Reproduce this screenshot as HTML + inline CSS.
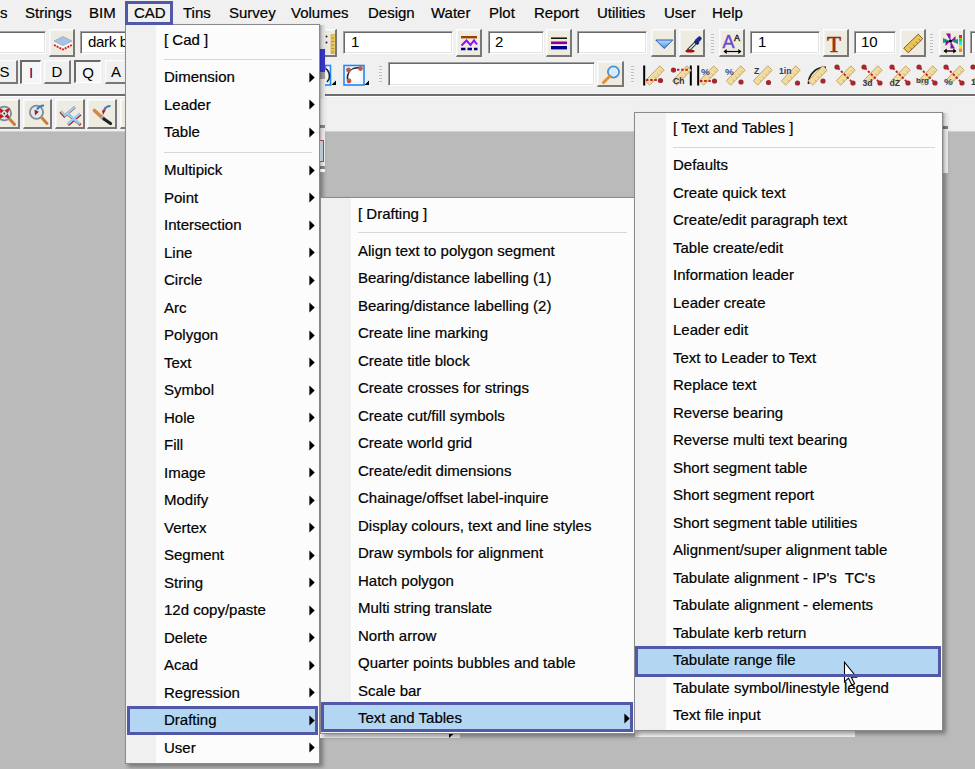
<!DOCTYPE html><html><head><meta charset="utf-8"><style>
html,body{margin:0;padding:0}body{width:975px;height:769px;overflow:hidden;position:relative;background:#f0f0f0;font-family:"Liberation Sans", sans-serif}
.t{position:absolute;white-space:nowrap;line-height:20px;font-family:"Liberation Sans", sans-serif;-webkit-text-stroke:0.2px #000}
.btn{position:absolute;box-sizing:border-box;border-style:solid;border-width:1px 2px 2px 1px;border-color:#fcfcfc #787878 #787878 #fcfcfc;box-shadow:inset 1px 1px #f4f4f4;overflow:hidden}
.sunk{position:absolute;box-sizing:border-box;border-style:solid;border-width:2px 1px 1px 2px;border-color:#6a6a6a #ffffff #ffffff #6a6a6a;overflow:hidden}
.inp{position:absolute;box-sizing:border-box;background:#fff;border-style:solid;border-width:1px;border-color:#a0a0a0 #ffffff #ffffff #a0a0a0;box-shadow:inset 1px 1px #696969, inset -1px -1px #e3e3e3;overflow:hidden;font-family:"Liberation Sans",sans-serif}
</style></head><body>
<div style="position:absolute;left:0px;top:0px;width:975px;height:25px;background:#f0f0f0"></div>
<div class="t" style="left:0px;top:2.60px;font-size:15px;color:#000;">s</div>
<div class="t" style="left:25px;top:2.60px;font-size:15px;color:#000;">Strings</div>
<div class="t" style="left:89px;top:2.60px;font-size:15px;color:#000;">BIM</div>
<div class="t" style="left:134px;top:2.60px;font-size:15px;color:#000;">CAD</div>
<div class="t" style="left:183px;top:2.60px;font-size:15px;color:#000;">Tins</div>
<div class="t" style="left:229px;top:2.60px;font-size:15px;color:#000;">Survey</div>
<div class="t" style="left:291px;top:2.60px;font-size:15px;color:#000;">Volumes</div>
<div class="t" style="left:368px;top:2.60px;font-size:15px;color:#000;">Design</div>
<div class="t" style="left:431px;top:2.60px;font-size:15px;color:#000;">Water</div>
<div class="t" style="left:489px;top:2.60px;font-size:15px;color:#000;">Plot</div>
<div class="t" style="left:534px;top:2.60px;font-size:15px;color:#000;">Report</div>
<div class="t" style="left:597px;top:2.60px;font-size:15px;color:#000;">Utilities</div>
<div class="t" style="left:664px;top:2.60px;font-size:15px;color:#000;">User</div>
<div class="t" style="left:712px;top:2.60px;font-size:15px;color:#000;">Help</div>
<div style="position:absolute;left:0px;top:25px;width:975px;height:106px;background:#f0f0f0"></div>
<div class="inp" style="left:-4px;top:31px;width:50px;height:23px"></div>
<div class="btn" style="left:49px;top:29px;width:26px;height:28px;background:#eeebe1"><svg style="position:absolute;left:0px;top:0px;overflow:visible" width="26" height="28" viewBox="0 0 26 28"><path d="M4 11 L13 6.5 L22 11 L13 15.5 Z" fill="#a6c2e6" stroke="#8aa8d0" stroke-width="0.7"/><path d="M4 13 L13 17.5 L22 13" fill="none" stroke="#ffffff" stroke-width="1.3"/><path d="M4 15 L13 19.5 L22 15" fill="none" stroke="#e01818" stroke-width="1.8" stroke-dasharray="2 1"/></svg></div>
<div class="inp" style="left:80px;top:31px;width:60px;height:23px"><span style="position:absolute;left:7px;top:0px;line-height:20px;font-size:15px;color:#000;letter-spacing:-0.3px;white-space:nowrap">dark blue</span></div>
<div class="btn" style="left:311px;top:29px;width:26px;height:28px;background:#eeebe1"><svg style="position:absolute;left:0px;top:0px;overflow:visible" width="26" height="28" viewBox="0 0 26 28"><rect x="19" y="4.5" width="4.5" height="19" fill="#eac860" stroke="#d0a848" stroke-width="0.7"/><path d="M19.5 8h2.5M19.5 11.5h2.5M19.5 15h2.5M19.5 18.5h2.5M19.5 22h2.5" stroke="#a07830" stroke-width="0.8"/><circle cx="14.5" cy="6.5" r="1" fill="#222"/><circle cx="14.5" cy="12.5" r="1" fill="#222"/></svg></div>
<div style="position:absolute;left:320px;top:49px;width:5px;height:22px;background:#3434c8"></div>
<div class="inp" style="left:343px;top:31px;width:110px;height:23px"><span style="position:absolute;left:7px;top:0px;line-height:20px;font-size:15px;color:#000;letter-spacing:0px;white-space:nowrap">1</span></div>
<div class="btn" style="left:456px;top:29px;width:26px;height:28px;background:#eeebe1"><svg style="position:absolute;left:0px;top:0px;overflow:visible" width="26" height="28" viewBox="0 0 26 28"><rect x="4" y="6" width="16" height="2.4" fill="#a04000"/><path d="M4.5 15.5 L9.5 10.5 L13.5 15 L17 10.5 L20 14.5" fill="none" stroke="#8a10ff" stroke-width="2"/><path d="M4 19h4.5M10.5 19h4.5M17 19h3.5" stroke="#000080" stroke-width="2.4"/></svg></div>
<div class="inp" style="left:488px;top:31px;width:56px;height:23px"><span style="position:absolute;left:6px;top:0px;line-height:20px;font-size:15px;color:#000;letter-spacing:0px;white-space:nowrap">2</span></div>
<div class="btn" style="left:546px;top:29px;width:26px;height:28px;background:#eeebe1"><svg style="position:absolute;left:0px;top:0px;overflow:visible" width="26" height="28" viewBox="0 0 26 28"><rect x="4" y="7.5" width="16" height="1.4" fill="#000"/><rect x="4" y="11.5" width="16" height="2.6" fill="#8a008a"/><rect x="4" y="16" width="16" height="3.4" fill="#000090"/></svg></div>
<div class="inp" style="left:577px;top:31px;width:70px;height:23px"></div>
<div class="btn" style="left:651px;top:29px;width:25px;height:28px;background:#eeebe1"><svg style="position:absolute;left:0px;top:0px;overflow:visible" width="25" height="28" viewBox="0 0 25 28"><defs><linearGradient id="tg" x1="0" y1="0" x2="0" y2="1"><stop offset="0" stop-color="#b8e0ff"/><stop offset="1" stop-color="#4a8ae0"/></linearGradient></defs><path d="M3.8 10 L20.8 10 L12.2 18.5 Z" fill="url(#tg)" stroke="#1c48a8" stroke-width="0.9" stroke-linejoin="round"/></svg></div>
<div class="btn" style="left:679px;top:29px;width:26px;height:28px;background:#eeebe1"><svg style="position:absolute;left:0px;top:0px;overflow:visible" width="26" height="28" viewBox="0 0 26 28"><path d="M8.5 20 L15.5 13" stroke="#303840" stroke-width="3.4" stroke-linecap="round"/><path d="M9 19.5 L15 13.5" stroke="#e4ecf2" stroke-width="1.4"/><path d="M15 10.5 L18.5 14" stroke="#101860" stroke-width="2.6"/><path d="M17 11 L19.5 8.5" stroke="#1a2a90" stroke-width="4.2" stroke-linecap="round"/><ellipse cx="10" cy="21" rx="4.6" ry="1.5" fill="#a01010"/></svg></div>
<div style="position:absolute;left:711px;top:34px;width:3px;height:19px;background:repeating-linear-gradient(#bcbcbc 0 1px,#f4f4f4 1px 3px)"></div>
<div class="btn" style="left:719px;top:29px;width:26px;height:28px;background:#eeebe1"><svg style="position:absolute;left:0px;top:0px;overflow:visible" width="26" height="28" viewBox="0 0 26 28"><text x="2.5" y="17.5" font-family="Liberation Sans" font-size="18" fill="#6a48d0" stroke="#6a48d0" stroke-width="0.4">A</text><text x="14" y="11" font-family="Liberation Sans" font-size="9" fill="#000" stroke="#000" stroke-width="0.3">A</text><path d="M4 21.5h17" stroke="#000" stroke-width="1.2"/><path d="M3.5 21.5l3.2-2.4v4.8z M21.5 21.5l-3.2-2.4v4.8z" fill="#000"/></svg></div>
<div class="inp" style="left:750px;top:31px;width:70px;height:23px"><span style="position:absolute;left:7px;top:0px;line-height:20px;font-size:15px;color:#000;letter-spacing:0px;white-space:nowrap">1</span></div>
<div class="btn" style="left:823px;top:29px;width:26px;height:28px;background:#eeebe1"><svg style="position:absolute;left:0px;top:0px;overflow:visible" width="26" height="28" viewBox="0 0 26 28"><text x="3" y="21.5" font-family="Liberation Serif" font-size="23" fill="#98300c" stroke="#98300c" stroke-width="0.6">T</text></svg></div>
<div class="inp" style="left:854px;top:31px;width:42px;height:23px"><span style="position:absolute;left:6px;top:0px;line-height:20px;font-size:15px;color:#000;letter-spacing:0px;white-space:nowrap">10</span></div>
<div class="btn" style="left:900px;top:29px;width:26px;height:28px;background:#eeebe1"><svg style="position:absolute;left:0px;top:0px;overflow:visible" width="26" height="28" viewBox="0 0 26 28"><path d="M7.22 22.80 L2.78 18.20 L17.28 4.20 L21.72 8.80 Z" fill="#ecc456" stroke="#6a5018" stroke-width="0.9" stroke-linejoin="round"/><path d="M10.63 19.07 L9.07 17.46 M13.53 16.27 L11.97 14.66 M16.43 13.47 L14.87 11.86 M19.33 10.67 L17.77 9.06 " stroke="#6a5018" stroke-width="0.7"/></svg></div>
<div style="position:absolute;left:930px;top:34px;width:3px;height:19px;background:repeating-linear-gradient(#bcbcbc 0 1px,#f4f4f4 1px 3px)"></div>
<div class="btn" style="left:939px;top:29px;width:26px;height:28px;background:#eeebe1"><svg style="position:absolute;left:0px;top:0px;overflow:visible" width="26" height="28" viewBox="0 0 26 28"><path d="M6 3.5 L10.5 3.5 L10.5 11 Z" fill="#8a10a0"/><path d="M10.5 11 L15.5 6 L15.5 11 Z" fill="#8a10a0"/><path d="M3 8 L3 13 L10 11 Z" fill="#18908c"/><path d="M11 11 L18 9 L18 14 Z" fill="#18908c"/><path d="M10.5 11 L10.5 18.5 L15 18.5 Z" fill="#8a10a0"/><path d="M10.5 11 L5.5 16 L5.5 11 Z" fill="#8a10a0"/><circle cx="10.5" cy="11" r="1.6" fill="#000"/><rect x="19" y="5" width="3" height="3.4" fill="#ff2020"/><rect x="19" y="8.4" width="3" height="3.4" fill="#20e020"/><rect x="19" y="11.8" width="3" height="3.4" fill="#20e8f0"/><rect x="19" y="15.2" width="3" height="3.4" fill="#ffe000"/><rect x="19" y="18.6" width="3" height="3.4" fill="#ff8030"/><path d="M5 21h10" stroke="#000" stroke-width="1.4"/><path d="M3.5 21l3.2-2.4v4.8z M16.5 21l-3.2-2.4v4.8z" fill="#000"/></svg></div>
<div class="inp" style="left:970px;top:31px;width:30px;height:23px"></div>
<div class="btn" style="left:-8px;top:60px;width:26px;height:24px;background:#f0f0f0"><span style="position:absolute;left:0px;right:0;top:1px;text-align:center;line-height:20px;font-size:15px;color:#000">S</span></div>
<div class="sunk" style="left:20px;top:60px;width:21px;height:24px;background:#f6f6f6"><span style="position:absolute;left:0px;right:0;top:1px;text-align:center;line-height:20px;font-size:15px;color:#4a0060">I</span></div>
<div class="btn" style="left:44px;top:60px;width:27px;height:24px;background:#f0f0f0"><span style="position:absolute;left:0px;right:0;top:1px;text-align:center;line-height:20px;font-size:15px;color:#000">D</span></div>
<div class="sunk" style="left:74px;top:60px;width:27px;height:23px;background:#f6f6f6"><span style="position:absolute;left:0px;right:0;top:1px;text-align:center;line-height:20px;font-size:15px;color:#000">Q</span></div>
<div class="btn" style="left:105px;top:60px;width:30px;height:24px;background:#f0f0f0"><span style="position:absolute;left:-7px;right:0;top:1px;text-align:center;line-height:20px;font-size:15px;color:#000">A</span></div>
<svg style="position:absolute;left:318px;top:64px;overflow:visible" width="52" height="23" viewBox="0 0 52 23"><rect x="-8" y="1.5" width="20.5" height="19.5" fill="#f6f6f6" stroke="#1e88ff" stroke-width="1.6"/><path d="M4 3 A9 9 0 0 1 9 18" fill="none" stroke="#222" stroke-width="1.6"/><circle cx="6" cy="4" r="2.3" fill="#c05848"/><path d="M13.5 21 L18 16.5 L18 21 Z" fill="#000"/><rect x="26" y="1.5" width="20" height="19.5" fill="#f6f6f6" stroke="#1e88ff" stroke-width="1.6"/><path d="M30 17 A10 10 0 0 1 43 4.5" fill="none" stroke="#222" stroke-width="1.6"/><circle cx="37" cy="11" r="6" fill="#ffffff"/><circle cx="30.5" cy="6" r="2.4" fill="#c05848"/><circle cx="42.5" cy="4.5" r="2.4" fill="#c05848"/><circle cx="31" cy="17" r="2.4" fill="#c05848"/><path d="M46.5 21 L51 16.5 L51 21 Z" fill="#000"/></svg>
<div style="position:absolute;left:379px;top:66px;width:3px;height:18px;background:repeating-linear-gradient(#bcbcbc 0 1px,#f4f4f4 1px 3px)"></div>
<div class="inp" style="left:388px;top:62px;width:207px;height:24px"></div>
<div class="btn" style="left:597px;top:61px;width:27px;height:26px;background:#eeebe1"><svg style="position:absolute;left:0px;top:0px;overflow:visible" width="27" height="26" viewBox="0 0 27 26"><circle cx="15.5" cy="10" r="5.6" fill="#d4ecff" stroke="#4a90d0" stroke-width="1.7"/><path d="M12 14 L5.5 20.5" stroke="#e89028" stroke-width="3" stroke-linecap="round"/></svg></div>
<div style="position:absolute;left:631px;top:66px;width:3px;height:18px;background:repeating-linear-gradient(#bcbcbc 0 1px,#f4f4f4 1px 3px)"></div>
<svg style="position:absolute;left:643px;top:64px;overflow:visible" width="22" height="22" viewBox="0 0 22 22"><path d="M1.2 1.5v20" stroke="#000" stroke-width="2"/><path d="M6.73 21.15 L2.27 16.85 L16.77 1.85 L21.23 6.15 Z" fill="#f0dca0" stroke="#c0a060" stroke-width="0.9" stroke-linejoin="round"/><path d="M10.13 17.19 L8.57 15.68 M13.03 14.19 L11.47 12.68 M15.93 11.19 L14.37 9.68 M18.83 8.19 L17.27 6.68 " stroke="#c0a060" stroke-width="0.7"/><path d="M3 16 L14 16" stroke="#c42020" stroke-width="1.9" stroke-dasharray="2.4 1.8"/><circle cx="17.5" cy="16.5" r="2.6" fill="#a42830"/></svg>
<svg style="position:absolute;left:670px;top:64px;overflow:visible" width="22" height="22" viewBox="0 0 22 22"><path d="M20.8 1.5v20" stroke="#000" stroke-width="2"/><path d="M6.73 21.15 L2.27 16.85 L16.77 1.85 L21.23 6.15 Z" fill="#f0dca0" stroke="#c0a060" stroke-width="0.9" stroke-linejoin="round"/><path d="M10.13 17.19 L8.57 15.68 M13.03 14.19 L11.47 12.68 M15.93 11.19 L14.37 9.68 M18.83 8.19 L17.27 6.68 " stroke="#c0a060" stroke-width="0.7"/><circle cx="3.5" cy="6" r="2.6" fill="#a42830"/><path d="M7 5.8 L19 5.8" stroke="#c42020" stroke-width="1.9" stroke-dasharray="2.4 1.8"/><text x="3" y="19.5" font-family="Liberation Sans" font-size="8.6" font-weight="bold" fill="#1c2450" opacity="0.9">Ch</text></svg>
<svg style="position:absolute;left:697px;top:64px;overflow:visible" width="22" height="22" viewBox="0 0 22 22"><path d="M1.2 1.5v20" stroke="#000" stroke-width="2"/><path d="M6.73 21.15 L2.27 16.85 L16.77 1.85 L21.23 6.15 Z" fill="#f0dca0" stroke="#c0a060" stroke-width="0.9" stroke-linejoin="round"/><path d="M10.13 17.19 L8.57 15.68 M13.03 14.19 L11.47 12.68 M15.93 11.19 L14.37 9.68 M18.83 8.19 L17.27 6.68 " stroke="#c0a060" stroke-width="0.7"/><text x="4" y="11" font-family="Liberation Sans" font-size="9.9" font-weight="bold" fill="#203a80" opacity="0.9">%</text><path d="M3 17 L14 17" stroke="#c42020" stroke-width="1.9" stroke-dasharray="2.4 1.8"/><circle cx="17.5" cy="17" r="2.6" fill="#a42830"/></svg>
<svg style="position:absolute;left:724px;top:64px;overflow:visible" width="22" height="22" viewBox="0 0 22 22"><path d="M6.73 21.15 L2.27 16.85 L16.77 1.85 L21.23 6.15 Z" fill="#f0dca0" stroke="#c0a060" stroke-width="0.9" stroke-linejoin="round"/><path d="M10.13 17.19 L8.57 15.68 M13.03 14.19 L11.47 12.68 M15.93 11.19 L14.37 9.68 M18.83 8.19 L17.27 6.68 " stroke="#c0a060" stroke-width="0.7"/><text x="1" y="11" font-family="Liberation Sans" font-size="9.9" font-weight="bold" fill="#203a80" opacity="0.9">%</text><circle cx="17" cy="18" r="2.6" fill="#a42830"/></svg>
<svg style="position:absolute;left:751px;top:64px;overflow:visible" width="22" height="22" viewBox="0 0 22 22"><path d="M6.73 21.15 L2.27 16.85 L16.77 1.85 L21.23 6.15 Z" fill="#f0dca0" stroke="#c0a060" stroke-width="0.9" stroke-linejoin="round"/><path d="M10.13 17.19 L8.57 15.68 M13.03 14.19 L11.47 12.68 M15.93 11.19 L14.37 9.68 M18.83 8.19 L17.27 6.68 " stroke="#c0a060" stroke-width="0.7"/><text x="3" y="9.5" font-family="Liberation Sans" font-size="8.6" font-weight="bold" fill="#1c2450" opacity="0.9">Z</text><circle cx="17.5" cy="18.5" r="2.6" fill="#a42830"/></svg>
<svg style="position:absolute;left:779px;top:64px;overflow:visible" width="22" height="22" viewBox="0 0 22 22"><path d="M6.73 21.15 L2.27 16.85 L16.77 1.85 L21.23 6.15 Z" fill="#f0dca0" stroke="#c0a060" stroke-width="0.9" stroke-linejoin="round"/><path d="M10.13 17.19 L8.57 15.68 M13.03 14.19 L11.47 12.68 M15.93 11.19 L14.37 9.68 M18.83 8.19 L17.27 6.68 " stroke="#c0a060" stroke-width="0.7"/><text x="0" y="9.5" font-family="Liberation Sans" font-size="8.6" font-weight="bold" fill="#1c2450" opacity="0.9">1in</text><circle cx="18.5" cy="19" r="2.6" fill="#a42830"/></svg>
<svg style="position:absolute;left:806px;top:64px;overflow:visible" width="22" height="22" viewBox="0 0 22 22"><path d="M2.5 20 A16 16 0 0 1 20 3.5" fill="none" stroke="#222" stroke-width="1.8"/><path d="M6.73 21.15 L2.27 16.85 L16.77 1.85 L21.23 6.15 Z" fill="#f0dca0" stroke="#c0a060" stroke-width="0.9" stroke-linejoin="round"/><path d="M10.13 17.19 L8.57 15.68 M13.03 14.19 L11.47 12.68 M15.93 11.19 L14.37 9.68 M18.83 8.19 L17.27 6.68 " stroke="#c0a060" stroke-width="0.7"/><circle cx="17" cy="17" r="2.6" fill="#a42830"/></svg>
<svg style="position:absolute;left:834px;top:64px;overflow:visible" width="22" height="22" viewBox="0 0 22 22"><path d="M6.73 21.15 L2.27 16.85 L16.77 1.85 L21.23 6.15 Z" fill="#f0dca0" stroke="#c0a060" stroke-width="0.9" stroke-linejoin="round"/><path d="M10.13 17.19 L8.57 15.68 M13.03 14.19 L11.47 12.68 M15.93 11.19 L14.37 9.68 M18.83 8.19 L17.27 6.68 " stroke="#c0a060" stroke-width="0.7"/><path d="M4 4 L18 18" stroke="#c42020" stroke-width="1.9" stroke-dasharray="2.4 1.8"/><circle cx="3" cy="3" r="2.6" fill="#a42830"/><circle cx="19" cy="19" r="2.6" fill="#a42830"/></svg>
<svg style="position:absolute;left:861px;top:64px;overflow:visible" width="22" height="22" viewBox="0 0 22 22"><path d="M6.73 21.15 L2.27 16.85 L16.77 1.85 L21.23 6.15 Z" fill="#f0dca0" stroke="#c0a060" stroke-width="0.9" stroke-linejoin="round"/><path d="M10.13 17.19 L8.57 15.68 M13.03 14.19 L11.47 12.68 M15.93 11.19 L14.37 9.68 M18.83 8.19 L17.27 6.68 " stroke="#c0a060" stroke-width="0.7"/><path d="M4 4 L18 18" stroke="#c42020" stroke-width="1.9" stroke-dasharray="2.4 1.8"/><circle cx="3" cy="3" r="2.6" fill="#a42830"/><circle cx="19" cy="19" r="2.6" fill="#a42830"/><text x="1.5" y="21.5" font-family="Liberation Sans" font-size="8.6" font-weight="bold" fill="#1c2450" opacity="0.9">3d</text></svg>
<svg style="position:absolute;left:889px;top:64px;overflow:visible" width="22" height="22" viewBox="0 0 22 22"><path d="M6.73 21.15 L2.27 16.85 L16.77 1.85 L21.23 6.15 Z" fill="#f0dca0" stroke="#c0a060" stroke-width="0.9" stroke-linejoin="round"/><path d="M10.13 17.19 L8.57 15.68 M13.03 14.19 L11.47 12.68 M15.93 11.19 L14.37 9.68 M18.83 8.19 L17.27 6.68 " stroke="#c0a060" stroke-width="0.7"/><path d="M4 4 L18 18" stroke="#c42020" stroke-width="1.9" stroke-dasharray="2.4 1.8"/><circle cx="3" cy="3" r="2.6" fill="#a42830"/><circle cx="19" cy="19" r="2.6" fill="#a42830"/><text x="0.5" y="21.5" font-family="Liberation Sans" font-size="8.6" font-weight="bold" fill="#1c2450" opacity="0.9">dZ</text></svg>
<svg style="position:absolute;left:916px;top:64px;overflow:visible" width="22" height="22" viewBox="0 0 22 22"><path d="M6.73 21.15 L2.27 16.85 L16.77 1.85 L21.23 6.15 Z" fill="#f0dca0" stroke="#c0a060" stroke-width="0.9" stroke-linejoin="round"/><path d="M10.13 17.19 L8.57 15.68 M13.03 14.19 L11.47 12.68 M15.93 11.19 L14.37 9.68 M18.83 8.19 L17.27 6.68 " stroke="#c0a060" stroke-width="0.7"/><path d="M4 4 L18 18" stroke="#c42020" stroke-width="1.9" stroke-dasharray="2.4 1.8"/><circle cx="3" cy="3" r="2.6" fill="#a42830"/><circle cx="19" cy="19" r="2.6" fill="#a42830"/><text x="0" y="19" font-family="Liberation Sans" font-size="8.1" font-weight="bold" fill="#1c2450" opacity="0.9">brg</text></svg>
<svg style="position:absolute;left:943px;top:64px;overflow:visible" width="22" height="22" viewBox="0 0 22 22"><path d="M6.73 21.15 L2.27 16.85 L16.77 1.85 L21.23 6.15 Z" fill="#f0dca0" stroke="#c0a060" stroke-width="0.9" stroke-linejoin="round"/><path d="M10.13 17.19 L8.57 15.68 M13.03 14.19 L11.47 12.68 M15.93 11.19 L14.37 9.68 M18.83 8.19 L17.27 6.68 " stroke="#c0a060" stroke-width="0.7"/><path d="M4 4 L18 18" stroke="#c42020" stroke-width="1.9" stroke-dasharray="2.4 1.8"/><circle cx="3" cy="3" r="2.6" fill="#a42830"/><circle cx="19" cy="19" r="2.6" fill="#a42830"/><text x="1" y="21" font-family="Liberation Sans" font-size="9.9" font-weight="bold" fill="#203a80" opacity="0.9">%</text></svg>
<svg style="position:absolute;left:970px;top:64px;overflow:visible" width="22" height="22" viewBox="0 0 22 22"><path d="M6.73 21.15 L2.27 16.85 L16.77 1.85 L21.23 6.15 Z" fill="#f0dca0" stroke="#c0a060" stroke-width="0.9" stroke-linejoin="round"/><path d="M10.13 17.19 L8.57 15.68 M13.03 14.19 L11.47 12.68 M15.93 11.19 L14.37 9.68 M18.83 8.19 L17.27 6.68 " stroke="#c0a060" stroke-width="0.7"/><circle cx="3" cy="3" r="2.6" fill="#a42830"/><text x="1" y="21" font-family="Liberation Sans" font-size="8.6" font-weight="bold" fill="#1c2450" opacity="0.9">1</text></svg>
<div class="btn" style="left:-10px;top:99px;width:30px;height:30px;background:#eeebe1"><svg style="position:absolute;left:0px;top:0px;overflow:visible" width="30" height="30" viewBox="0 0 30 30"><circle cx="13.3" cy="13.5" r="6.8" fill="#d8e6f0" stroke="#7e8c98" stroke-width="1.8"/><path d="M8.5 9 L12 10.5 L10 12.5 Z M18 9 L14.5 10.5 L16.5 12.5 Z M8.5 18 L12 16.5 L10 14.5 Z M18 18 L14.5 16.5 L16.5 14.5 Z" fill="#c81818" stroke="#c81818" stroke-width="1.2"/><circle cx="13.3" cy="13.5" r="0.9" fill="#333"/><path d="M19 19.5 L23.5 24.5" stroke="#c8803a" stroke-width="3" stroke-linecap="round"/></svg></div>
<div class="btn" style="left:23px;top:99px;width:29px;height:30px;background:#eeebe1"><svg style="position:absolute;left:0px;top:0px;overflow:visible" width="29" height="30" viewBox="0 0 29 30"><circle cx="12.5" cy="12.3" r="6.6" fill="#e0ecf4" stroke="#7e8c98" stroke-width="1.8"/><path d="M10.5 9.5 L14.8 11.8 L11 15.5 Z" fill="#c01010"/><path d="M13 9.5 Q15.5 5.5 20 5.5" fill="none" stroke="#3a78c0" stroke-width="2.2"/><path d="M18 18 L23 23.5" stroke="#c8803a" stroke-width="3" stroke-linecap="round"/></svg></div>
<div class="btn" style="left:55px;top:99px;width:30px;height:30px;background:#eeebe1"><svg style="position:absolute;left:0px;top:0px;overflow:visible" width="30" height="30" viewBox="0 0 30 30"><path d="M5 11 L9 15.3 L19.3 6.3" fill="none" stroke="#c01818" stroke-width="2.6" transform="translate(-0.6,0.9)"/><path d="M5 11 L9 15.3 L19.3 6.3" fill="none" stroke="#90d0f4" stroke-width="2.4"/><path d="M11.5 13.5 L24 24 M24 13.5 L11.5 24" fill="none" stroke="#c01818" stroke-width="2.6" transform="translate(0.6,0.9)"/><path d="M11.5 13.5 L24 24 M24 13.5 L11.5 24" fill="none" stroke="#90d0f4" stroke-width="2.4"/></svg></div>
<div class="btn" style="left:87px;top:99px;width:30px;height:30px;background:#eeebe1"><svg style="position:absolute;left:0px;top:0px;overflow:visible" width="30" height="30" viewBox="0 0 30 30"><path d="M6.5 10.5 L13.5 17" stroke="#d08a48" stroke-width="3.6" stroke-linecap="round"/><path d="M13 16.5 L16.5 19.5" stroke="#a0a8b0" stroke-width="3.8"/><path d="M16 19 L22.5 23.5" stroke="#202020" stroke-width="3.2" stroke-linecap="round"/><path d="M14 10.5 L18 9.5 L15 15 Z" fill="#c01010"/><path d="M16 10 Q18 6 22.5 6" fill="none" stroke="#3a78c0" stroke-width="2.2"/></svg></div>
<div class="btn" style="left:120px;top:99px;width:30px;height:30px;background:#eeebe1"></div>
<div style="position:absolute;left:0px;top:94px;width:975px;height:2px;background:#6e6e6e"></div>
<div style="position:absolute;left:0px;top:96px;width:975px;height:1px;background:#ffffff"></div>
<div style="position:absolute;left:0px;top:131px;width:975px;height:1px;background:#d0d0d0"></div>
<div style="position:absolute;left:0px;top:132px;width:975px;height:637px;background:#bababa"></div>
<div style="position:absolute;left:125px;top:24px;width:195px;height:740px;box-shadow:3px 3px 4px rgba(0,0,0,0.35)"></div>
<div style="position:absolute;left:125px;top:24px;width:195px;height:740px;background:#fcfcfc;border:1px solid #8a8a8a;box-sizing:border-box"></div>
<div style="position:absolute;left:126px;top:25px;width:30px;height:738px;background:#f0f0f0"></div>
<div class="t" style="left:164px;top:30.00px;font-size:15px;color:#000;">[ Cad ]</div>
<div style="position:absolute;left:164px;top:59px;width:148px;height:1px;background:#d7d7d7"></div>
<div class="t" style="left:164px;top:67.00px;font-size:15px;color:#000;">Dimension</div>
<svg style="position:absolute;left:308.5px;top:71.7px" width="6" height="11" viewBox="0 0 6 11"><path d="M0.4 0.6 L5.7 5.5 L0.4 10.4 Z" fill="#000"/></svg>
<div class="t" style="left:164px;top:94.50px;font-size:15px;color:#000;">Leader</div>
<svg style="position:absolute;left:308.5px;top:99.2px" width="6" height="11" viewBox="0 0 6 11"><path d="M0.4 0.6 L5.7 5.5 L0.4 10.4 Z" fill="#000"/></svg>
<div class="t" style="left:164px;top:122.00px;font-size:15px;color:#000;">Table</div>
<svg style="position:absolute;left:308.5px;top:126.69999999999999px" width="6" height="11" viewBox="0 0 6 11"><path d="M0.4 0.6 L5.7 5.5 L0.4 10.4 Z" fill="#000"/></svg>
<div style="position:absolute;left:164px;top:152px;width:148px;height:1px;background:#d7d7d7"></div>
<div class="t" style="left:164px;top:160.00px;font-size:15px;color:#000;">Multipick</div>
<svg style="position:absolute;left:308.5px;top:164.7px" width="6" height="11" viewBox="0 0 6 11"><path d="M0.4 0.6 L5.7 5.5 L0.4 10.4 Z" fill="#000"/></svg>
<div class="t" style="left:164px;top:187.50px;font-size:15px;color:#000;">Point</div>
<svg style="position:absolute;left:308.5px;top:192.2px" width="6" height="11" viewBox="0 0 6 11"><path d="M0.4 0.6 L5.7 5.5 L0.4 10.4 Z" fill="#000"/></svg>
<div class="t" style="left:164px;top:215.00px;font-size:15px;color:#000;">Intersection</div>
<svg style="position:absolute;left:308.5px;top:219.7px" width="6" height="11" viewBox="0 0 6 11"><path d="M0.4 0.6 L5.7 5.5 L0.4 10.4 Z" fill="#000"/></svg>
<div class="t" style="left:164px;top:242.50px;font-size:15px;color:#000;">Line</div>
<svg style="position:absolute;left:308.5px;top:247.2px" width="6" height="11" viewBox="0 0 6 11"><path d="M0.4 0.6 L5.7 5.5 L0.4 10.4 Z" fill="#000"/></svg>
<div class="t" style="left:164px;top:270.00px;font-size:15px;color:#000;">Circle</div>
<svg style="position:absolute;left:308.5px;top:274.7px" width="6" height="11" viewBox="0 0 6 11"><path d="M0.4 0.6 L5.7 5.5 L0.4 10.4 Z" fill="#000"/></svg>
<div class="t" style="left:164px;top:297.50px;font-size:15px;color:#000;">Arc</div>
<svg style="position:absolute;left:308.5px;top:302.2px" width="6" height="11" viewBox="0 0 6 11"><path d="M0.4 0.6 L5.7 5.5 L0.4 10.4 Z" fill="#000"/></svg>
<div class="t" style="left:164px;top:325.00px;font-size:15px;color:#000;">Polygon</div>
<svg style="position:absolute;left:308.5px;top:329.7px" width="6" height="11" viewBox="0 0 6 11"><path d="M0.4 0.6 L5.7 5.5 L0.4 10.4 Z" fill="#000"/></svg>
<div class="t" style="left:164px;top:352.50px;font-size:15px;color:#000;">Text</div>
<svg style="position:absolute;left:308.5px;top:357.2px" width="6" height="11" viewBox="0 0 6 11"><path d="M0.4 0.6 L5.7 5.5 L0.4 10.4 Z" fill="#000"/></svg>
<div class="t" style="left:164px;top:380.00px;font-size:15px;color:#000;">Symbol</div>
<svg style="position:absolute;left:308.5px;top:384.7px" width="6" height="11" viewBox="0 0 6 11"><path d="M0.4 0.6 L5.7 5.5 L0.4 10.4 Z" fill="#000"/></svg>
<div class="t" style="left:164px;top:407.50px;font-size:15px;color:#000;">Hole</div>
<svg style="position:absolute;left:308.5px;top:412.2px" width="6" height="11" viewBox="0 0 6 11"><path d="M0.4 0.6 L5.7 5.5 L0.4 10.4 Z" fill="#000"/></svg>
<div class="t" style="left:164px;top:435.00px;font-size:15px;color:#000;">Fill</div>
<svg style="position:absolute;left:308.5px;top:439.7px" width="6" height="11" viewBox="0 0 6 11"><path d="M0.4 0.6 L5.7 5.5 L0.4 10.4 Z" fill="#000"/></svg>
<div class="t" style="left:164px;top:462.50px;font-size:15px;color:#000;">Image</div>
<svg style="position:absolute;left:308.5px;top:467.2px" width="6" height="11" viewBox="0 0 6 11"><path d="M0.4 0.6 L5.7 5.5 L0.4 10.4 Z" fill="#000"/></svg>
<div class="t" style="left:164px;top:490.00px;font-size:15px;color:#000;">Modify</div>
<svg style="position:absolute;left:308.5px;top:494.7px" width="6" height="11" viewBox="0 0 6 11"><path d="M0.4 0.6 L5.7 5.5 L0.4 10.4 Z" fill="#000"/></svg>
<div class="t" style="left:164px;top:517.50px;font-size:15px;color:#000;">Vertex</div>
<svg style="position:absolute;left:308.5px;top:522.2px" width="6" height="11" viewBox="0 0 6 11"><path d="M0.4 0.6 L5.7 5.5 L0.4 10.4 Z" fill="#000"/></svg>
<div class="t" style="left:164px;top:545.00px;font-size:15px;color:#000;">Segment</div>
<svg style="position:absolute;left:308.5px;top:549.7px" width="6" height="11" viewBox="0 0 6 11"><path d="M0.4 0.6 L5.7 5.5 L0.4 10.4 Z" fill="#000"/></svg>
<div class="t" style="left:164px;top:572.50px;font-size:15px;color:#000;">String</div>
<svg style="position:absolute;left:308.5px;top:577.2px" width="6" height="11" viewBox="0 0 6 11"><path d="M0.4 0.6 L5.7 5.5 L0.4 10.4 Z" fill="#000"/></svg>
<div class="t" style="left:164px;top:600.00px;font-size:15px;color:#000;">12d copy/paste</div>
<svg style="position:absolute;left:308.5px;top:604.7px" width="6" height="11" viewBox="0 0 6 11"><path d="M0.4 0.6 L5.7 5.5 L0.4 10.4 Z" fill="#000"/></svg>
<div class="t" style="left:164px;top:627.50px;font-size:15px;color:#000;">Delete</div>
<svg style="position:absolute;left:308.5px;top:632.2px" width="6" height="11" viewBox="0 0 6 11"><path d="M0.4 0.6 L5.7 5.5 L0.4 10.4 Z" fill="#000"/></svg>
<div class="t" style="left:164px;top:655.00px;font-size:15px;color:#000;">Acad</div>
<svg style="position:absolute;left:308.5px;top:659.7px" width="6" height="11" viewBox="0 0 6 11"><path d="M0.4 0.6 L5.7 5.5 L0.4 10.4 Z" fill="#000"/></svg>
<div class="t" style="left:164px;top:682.50px;font-size:15px;color:#000;">Regression</div>
<svg style="position:absolute;left:308.5px;top:687.2px" width="6" height="11" viewBox="0 0 6 11"><path d="M0.4 0.6 L5.7 5.5 L0.4 10.4 Z" fill="#000"/></svg>
<div style="position:absolute;left:127px;top:706px;width:191px;height:29px;background:#b3d7f3;border:3.5px solid #5258a8;box-sizing:border-box"></div>
<div class="t" style="left:164px;top:710.00px;font-size:15px;color:#000;">Drafting</div>
<svg style="position:absolute;left:308.5px;top:714.7px" width="6" height="11" viewBox="0 0 6 11"><path d="M0.4 0.6 L5.7 5.5 L0.4 10.4 Z" fill="#000"/></svg>
<div class="t" style="left:164px;top:737.50px;font-size:15px;color:#000;">User</div>
<svg style="position:absolute;left:308.5px;top:742.2px" width="6" height="11" viewBox="0 0 6 11"><path d="M0.4 0.6 L5.7 5.5 L0.4 10.4 Z" fill="#000"/></svg>
<div style="position:absolute;left:125px;top:1px;width:48px;height:24px;border:3.5px solid #5258a8;box-sizing:border-box"></div>
<div style="position:absolute;left:320px;top:25px;width:5px;height:75px;background:linear-gradient(90deg,#9a9a9a,#cfcfcf 40%,#e6e6e6)"></div>
<div style="position:absolute;left:320px;top:49px;width:5px;height:23px;background:linear-gradient(90deg,#2a2a9a,#3434c8 40%)"></div>
<div style="position:absolute;left:320px;top:72px;width:5px;height:7px;background:linear-gradient(90deg,#6a6a6a,#8a8a8a 40%,#a0a0a0)"></div>
<div style="position:absolute;left:320px;top:99px;width:5px;height:73px;background:linear-gradient(90deg,#a8a8a8,#d8d8d8 40%,#ececec)"></div>
<div style="position:absolute;left:320px;top:125px;width:5px;height:3px;background:linear-gradient(90deg,#5a5a5a,#7a7a7a 40%,#8a8a8a)"></div>
<div style="position:absolute;left:320px;top:140px;width:4px;height:22px;background:#b8c8d0;border:1.5px solid #b04040;border-left:none;box-sizing:border-box"></div>
<div style="position:absolute;left:320px;top:166px;width:5px;height:3px;background:linear-gradient(90deg,#5a5a5a,#7a7a7a 40%,#8a8a8a)"></div>
<div style="position:absolute;left:320px;top:169px;width:5px;height:3px;background:linear-gradient(90deg,#c0c0c0,#f4f4f4 40%)"></div>
<div style="position:absolute;left:320px;top:733px;width:140px;height:5px;background:#f4f4f4"></div>
<svg style="position:absolute;left:448px;top:733px" width="8" height="5"><path d="M1 0 L6.5 0 L1 5 Z" fill="#000"/></svg>
<div style="position:absolute;left:635px;top:731px;width:220px;height:6px;background:#f0f0f0"></div>
<div style="position:absolute;left:320px;top:197px;width:315px;height:537px;box-shadow:3px 3px 4px rgba(0,0,0,0.35)"></div>
<div style="position:absolute;left:320px;top:197px;width:315px;height:537px;background:#fcfcfc;border:1px solid #8a8a8a;box-sizing:border-box"></div>
<div style="position:absolute;left:321px;top:198px;width:30px;height:535px;background:#f0f0f0"></div>
<div class="t" style="left:358px;top:203.80px;font-size:15px;color:#000;">[ Drafting ]</div>
<div style="position:absolute;left:358px;top:232px;width:269px;height:1px;background:#d7d7d7"></div>
<div class="t" style="left:358px;top:240.80px;font-size:15px;color:#000;">Align text to polygon segment</div>
<div class="t" style="left:358px;top:268.30px;font-size:15px;color:#000;">Bearing/distance labelling (1)</div>
<div class="t" style="left:358px;top:295.80px;font-size:15px;color:#000;">Bearing/distance labelling (2)</div>
<div class="t" style="left:358px;top:323.30px;font-size:15px;color:#000;">Create line marking</div>
<div class="t" style="left:358px;top:350.80px;font-size:15px;color:#000;">Create title block</div>
<div class="t" style="left:358px;top:378.30px;font-size:15px;color:#000;">Create crosses for strings</div>
<div class="t" style="left:358px;top:405.80px;font-size:15px;color:#000;">Create cut/fill symbols</div>
<div class="t" style="left:358px;top:433.30px;font-size:15px;color:#000;">Create world grid</div>
<div class="t" style="left:358px;top:460.80px;font-size:15px;color:#000;">Create/edit dimensions</div>
<div class="t" style="left:358px;top:488.30px;font-size:15px;color:#000;">Chainage/offset label-inquire</div>
<div class="t" style="left:358px;top:515.80px;font-size:15px;color:#000;">Display colours, text and line styles</div>
<div class="t" style="left:358px;top:543.30px;font-size:15px;color:#000;">Draw symbols for alignment</div>
<div class="t" style="left:358px;top:570.80px;font-size:15px;color:#000;">Hatch polygon</div>
<div class="t" style="left:358px;top:598.30px;font-size:15px;color:#000;">Multi string translate</div>
<div class="t" style="left:358px;top:625.80px;font-size:15px;color:#000;">North arrow</div>
<div class="t" style="left:358px;top:653.30px;font-size:15px;color:#000;">Quarter points bubbles and table</div>
<div class="t" style="left:358px;top:680.80px;font-size:15px;color:#000;">Scale bar</div>
<div style="position:absolute;left:321px;top:702px;width:312px;height:30px;background:#b3d7f3;border:3.5px solid #5258a8;box-sizing:border-box"></div>
<div class="t" style="left:358px;top:708.30px;font-size:15px;color:#000;">Text and Tables</div>
<svg style="position:absolute;left:623.5px;top:713.0px" width="6" height="11" viewBox="0 0 6 11"><path d="M0.4 0.6 L5.7 5.5 L0.4 10.4 Z" fill="#000"/></svg>
<div style="position:absolute;left:634px;top:112px;width:309px;height:619px;box-shadow:3px 3px 4px rgba(0,0,0,0.35)"></div>
<div style="position:absolute;left:634px;top:112px;width:309px;height:619px;background:#fcfcfc;border:1px solid #8a8a8a;box-sizing:border-box"></div>
<div style="position:absolute;left:635px;top:113px;width:31px;height:617px;background:#f0f0f0"></div>
<div class="t" style="left:673px;top:118.30px;font-size:15px;color:#000;">[ Text and Tables ]</div>
<div style="position:absolute;left:673px;top:147px;width:262px;height:1px;background:#d7d7d7"></div>
<div class="t" style="left:673px;top:155.30px;font-size:15px;color:#000;">Defaults</div>
<div class="t" style="left:673px;top:182.80px;font-size:15px;color:#000;">Create quick text</div>
<div class="t" style="left:673px;top:210.30px;font-size:15px;color:#000;">Create/edit paragraph text</div>
<div class="t" style="left:673px;top:237.80px;font-size:15px;color:#000;">Table create/edit</div>
<div class="t" style="left:673px;top:265.30px;font-size:15px;color:#000;">Information leader</div>
<div class="t" style="left:673px;top:292.80px;font-size:15px;color:#000;">Leader create</div>
<div class="t" style="left:673px;top:320.30px;font-size:15px;color:#000;">Leader edit</div>
<div class="t" style="left:673px;top:347.80px;font-size:15px;color:#000;">Text to Leader to Text</div>
<div class="t" style="left:673px;top:375.30px;font-size:15px;color:#000;">Replace text</div>
<div class="t" style="left:673px;top:402.80px;font-size:15px;color:#000;">Reverse bearing</div>
<div class="t" style="left:673px;top:430.30px;font-size:15px;color:#000;">Reverse multi text bearing</div>
<div class="t" style="left:673px;top:457.80px;font-size:15px;color:#000;">Short segment table</div>
<div class="t" style="left:673px;top:485.30px;font-size:15px;color:#000;">Short segment report</div>
<div class="t" style="left:673px;top:512.80px;font-size:15px;color:#000;">Short segment table utilities</div>
<div class="t" style="left:673px;top:540.30px;font-size:15px;color:#000;">Alignment/super alignment table</div>
<div class="t" style="left:673px;top:567.80px;font-size:15px;color:#000;">Tabulate alignment - IP's&nbsp; TC's</div>
<div class="t" style="left:673px;top:595.30px;font-size:15px;color:#000;">Tabulate alignment - elements</div>
<div class="t" style="left:673px;top:622.80px;font-size:15px;color:#000;">Tabulate kerb return</div>
<div style="position:absolute;left:635px;top:646px;width:306px;height:31px;background:#b3d7f3;border:3.5px solid #5258a8;box-sizing:border-box"></div>
<div class="t" style="left:673px;top:650.30px;font-size:15px;color:#000;">Tabulate range file</div>
<div class="t" style="left:673px;top:677.80px;font-size:15px;color:#000;">Tabulate symbol/linestyle legend</div>
<div class="t" style="left:673px;top:705.30px;font-size:15px;color:#000;">Text file input</div>
<svg style="position:absolute;left:843px;top:661px;overflow:visible" width="16" height="24" viewBox="0 0 16 24"><path d="M1.5 1.2 L1.5 21 L5.5 17.2 L9 24 L11.6 22.8 L8.3 16.2 L13.6 16.2 Z" fill="#fff" stroke="#000" stroke-width="1.1" stroke-linejoin="miter"/></svg>
<div style="position:absolute;left:635px;top:646px;width:306px;height:31px;border:3.5px solid #5258a8;box-sizing:border-box"></div>
<div style="position:absolute;left:943px;top:113px;width:5px;height:60px;background:linear-gradient(90deg,#a0a0a0,#d4d4d4 40%,#e8e8e8)"></div>
<div style="position:absolute;left:943px;top:126px;width:5px;height:3px;background:linear-gradient(90deg,#505050,#6a6a6a 40%,#7a7a7a)"></div>
</body></html>
